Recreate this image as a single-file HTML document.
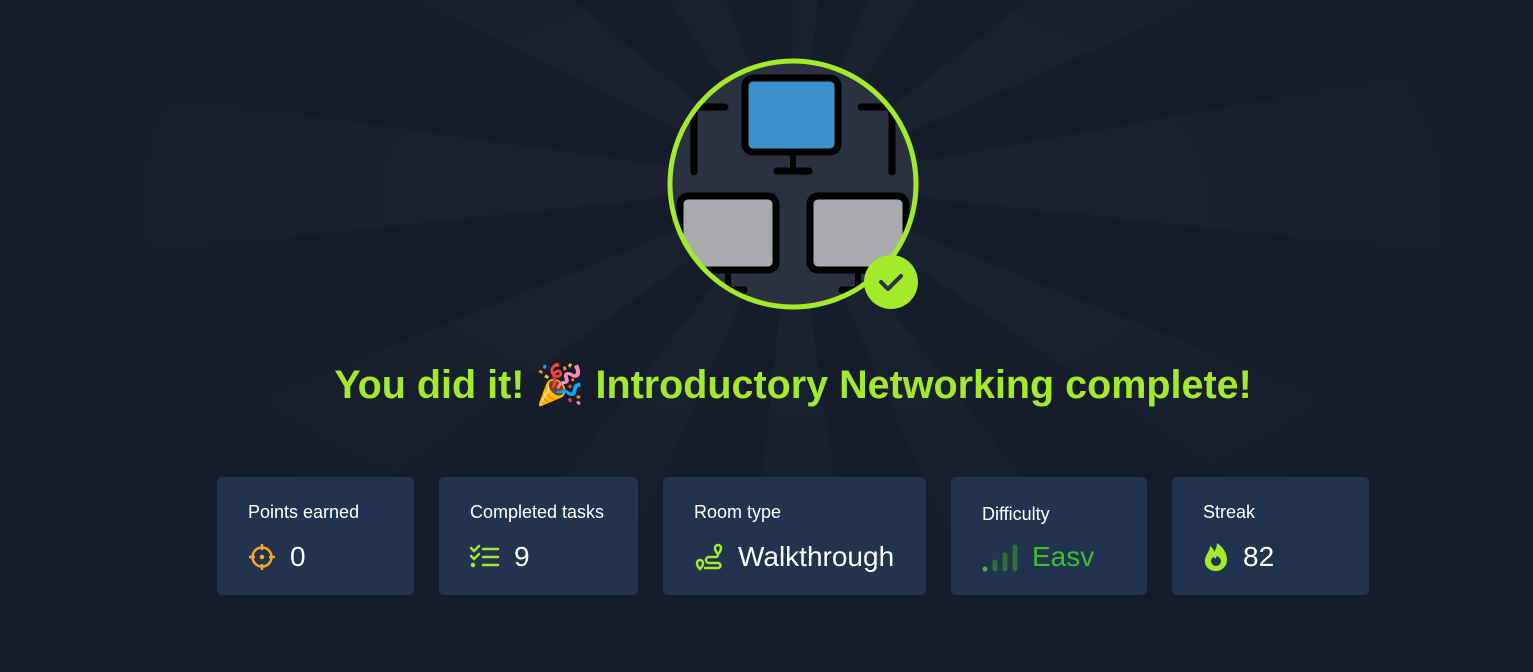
<!DOCTYPE html>
<html><head><meta charset="utf-8"><style>
html,body{margin:0;padding:0}
body{width:1533px;height:672px;overflow:hidden;position:relative;font-family:"Liberation Sans","DejaVu Sans",sans-serif;
background:#161c2b;}
.rays{position:absolute;inset:0;background:conic-gradient(from 0deg at 793px 184px,
#1a2131 0deg 8deg,#161c2b 8deg 22deg,#1a2131 22deg 34deg,#161c2b 34deg 52deg,#1a2131 52deg 66deg,#161c2b 66deg 80deg,#1a2131 80deg 96deg,#161c2b 96deg 112deg,#1a2131 112deg 124deg,#161c2b 124deg 142deg,#1a2131 142deg 156deg,#161c2b 156deg 172deg,#1a2131 172deg 186deg,#161c2b 186deg 204deg,#1a2131 204deg 218deg,#161c2b 218deg 234deg,#1a2131 234deg 248deg,#161c2b 248deg 264deg,#1a2131 264deg 278deg,#161c2b 278deg 296deg,#1a2131 296deg 310deg,#161c2b 310deg 326deg,#1a2131 326deg 340deg,#161c2b 340deg 360deg);}
.fade{position:absolute;inset:0;background:radial-gradient(ellipse 800px 420px at 793px 200px,rgba(22,28,43,0) 30%,rgba(22,28,43,1) 100%);}
h1{position:absolute;left:0;width:1586px;top:361px;margin:0;text-align:center;color:#a3ea2a;font-size:39.5px;font-weight:bold;font-family:"Liberation Sans",sans-serif}
.card{position:absolute;top:477px;height:118px;background:#21334f;border-radius:5px;color:#fff}
.card .l{position:absolute;left:31px;top:25px;font-size:18px}
.card .v{position:absolute;left:31px;top:63px;font-size:28px;display:flex;align-items:center;gap:14px;height:34px}
</style></head><body>
<div class="rays"></div><div class="fade"></div>
<svg style="position:absolute;left:0;top:0" width="1533" height="672">
<defs><clipPath id="c"><circle cx="793" cy="184" r="122"/></clipPath></defs>
<circle cx="793" cy="184" r="122" fill="#2b3140"/>
<g clip-path="url(#c)">
<rect x="745" y="78" width="93" height="74" rx="8" fill="#3c91cc" stroke="#000" stroke-width="7"/>
<line x1="793" y1="152" x2="793" y2="170" stroke="#000" stroke-width="6"/>
<line x1="777" y1="171" x2="809" y2="171" stroke="#000" stroke-width="7" stroke-linecap="round"/>
<path d="M725 107H694V172" fill="none" stroke="#000" stroke-width="7" stroke-linecap="round"/>
<path d="M861 107H892V172" fill="none" stroke="#000" stroke-width="7" stroke-linecap="round"/>
<rect x="680" y="196" width="96" height="74" rx="8" fill="#a9aaad" stroke="#000" stroke-width="7"/>
<rect x="810" y="196" width="96" height="74" rx="8" fill="#a9aaad" stroke="#000" stroke-width="7"/>
<line x1="728" y1="270" x2="728" y2="290" stroke="#000" stroke-width="6"/>
<line x1="858" y1="270" x2="858" y2="290" stroke="#000" stroke-width="6"/>
<line x1="712" y1="290" x2="744" y2="290" stroke="#000" stroke-width="7" stroke-linecap="round"/>
<line x1="842" y1="290" x2="874" y2="290" stroke="#000" stroke-width="7" stroke-linecap="round"/>
</g>
<circle cx="793" cy="184" r="123" fill="none" stroke="#a3ea2a" stroke-width="5"/>
<circle cx="891" cy="282" r="27" fill="#a3ea2a"/>
<path d="M881 282l7 7 13-13" fill="none" stroke="#2b3140" stroke-width="4" stroke-linecap="round" stroke-linejoin="round"/>
</svg>
<h1>You did it! <span style="font-family:'Noto Color Emoji','DejaVu Sans',sans-serif;font-weight:normal">🎉</span> Introductory Networking complete!</h1>

<div class="card" style="left:217px;width:197px"><div class="l">Points earned</div>
<div class="v"><svg width="28" height="28" viewBox="0 0 28 28" fill="none" stroke="#f5a623" stroke-width="2.5"><circle cx="14" cy="14" r="9.5"/><path d="M14 1v6M14 21v6M1 14h6M21 14h6"/><circle cx="14" cy="14" r="1" fill="#f5a623"/></svg>0</div></div>

<div class="card" style="left:439px;width:199px"><div class="l">Completed tasks</div>
<div class="v"><svg width="30" height="26" viewBox="0 0 30 26" fill="none" stroke="#a3ea2a" stroke-width="2.5" stroke-linecap="round"><path d="M1 4l3 3 5-5M1 12l3 3 5-5M13 5h15M13 13h15M13 21h15"/><circle cx="3" cy="21" r="1" fill="#a3ea2a"/></svg>9</div></div>

<div class="card" style="left:663px;width:263px"><div class="l">Room type</div>
<div class="v"><svg width="30" height="30" viewBox="0 0 30 30" fill="none" stroke="#a3ea2a" stroke-width="2.5" stroke-linecap="round"><path d="M24 12c3-3 3-5 3-6a3 3 0 0 0-6 0c0 1 0 3 3 6zM24 12v1a2 2 0 0 1-2 2h-7a3 3 0 0 0 0 6h9a2 2 0 0 1 0 5H11M6 27c-3-3-3-5-3-6a3 3 0 0 1 6 0c0 1 0 3-3 6z"/></svg>Walkthrough</div></div>

<div class="card" style="left:951px;width:196px"><div class="l" style="top:27px">Difficulty</div>
<div class="v" style="color:#3bbf2e"><svg width="36" height="30" viewBox="0 0 36 30" stroke-linecap="round" stroke-width="5"><circle cx="3" cy="27" r="2.5" fill="#3bbf2e"/><path d="M13 20v7" stroke="#2f6e3a"/><path d="M23 13v14" stroke="#2f6e3a"/><path d="M33 5v22" stroke="#2f6e3a"/></svg>Easv</div></div>

<div class="card" style="left:1172px;width:197px"><div class="l">Streak</div>
<div class="v"><svg width="26" height="30" viewBox="0 0 26 30"><path d="M13 29C5 29 1 23 2 17c1-5 5-8 5-13 3 2 4 4 4 6 2-3 3-6 3-9 6 4 10 10 10 17 0 6-5 11-11 11z" fill="#a3ea2a"/><path d="M13 24a5 5 0 0 1-5-5c0-2 1-3 3-4l1 2 2-3c2 1 4 3 4 5a5 5 0 0 1-5 5z" fill="#21334f"/></svg>82</div></div>
</body></html>
